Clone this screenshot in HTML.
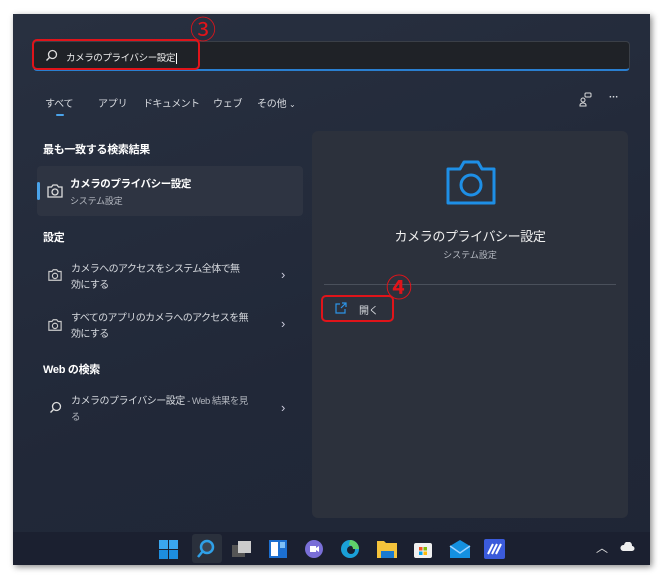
<!DOCTYPE html>
<html><head><meta charset="utf-8"><style>
body{margin:0;width:665px;height:579px;background:#fff;position:relative;overflow:hidden;font-family:"Liberation Sans","Noto Sans CJK JP",sans-serif;color:#fff}
.win{position:absolute;left:13px;top:14px;width:637px;height:551px;background:linear-gradient(160deg,#283040,#212838 60%,#1f2636);box-shadow:2px 2px 6px rgba(0,0,0,.45)}
.a{position:absolute}
.sb{left:33px;top:41px;width:597px;height:30px;background:#1f2227;border:1px solid #3a3f47;border-bottom:2px solid #2a7fd0;border-radius:4px;box-sizing:border-box}
.t{font-size:10px;color:#d8dbe0;white-space:nowrap;letter-spacing:-0.2px}
.h{font-size:11px;font-weight:bold;color:#fff;letter-spacing:-0.3px}
.rp{left:312px;top:131px;width:316px;height:387px;background:#2c313c;border-radius:6px}
.hl{left:37px;top:166px;width:266px;height:50px;background:#2e3442;border-radius:4px}
.chev{font-size:13px;color:#ccd}
.red{border:2.5px solid #e0141a;border-radius:5px;box-sizing:border-box}
.circ{color:#e0141a;font-size:26px;font-weight:normal}
.tb{left:13px;top:532px;width:637px;height:33px;background:#1b2030}
</style></head><body>
<div class="win"></div>
<div class="a sb"></div>
<svg class="a" style="left:45px;top:49px" width="13" height="13" viewBox="0 0 13 13"><circle cx="7.5" cy="5.5" r="4" fill="none" stroke="#ddd" stroke-width="1.3"/><path d="M4.7 8.3L1.5 11.5" stroke="#ddd" stroke-width="1.4"/></svg>
<div class="a t" style="left:66px;top:50px;color:#eee;font-size:9.5px;letter-spacing:-0.4px">カメラのプライバシー設定<span style="border-left:1px solid #fff;margin-left:1px"></span></div>
<div class="a red" style="left:32px;top:39px;width:168px;height:31px"></div>
<div class="a circ" style="left:190px;top:10px">③</div>
<div class="a t" style="left:45px;top:95px">すべて</div>
<div class="a" style="left:56px;top:114px;width:8px;height:2px;background:#4aa3ea;border-radius:1px"></div>
<div class="a t" style="left:98px;top:95px">アプリ</div>
<div class="a t" style="left:143px;top:95px;letter-spacing:-0.6px">ドキュメント</div>
<div class="a t" style="left:213px;top:95px">ウェブ</div>
<div class="a t" style="left:257px;top:95px">その他 <span style="font-size:8px">⌄</span></div>
<svg class="a" style="left:579px;top:92px" width="14" height="16" viewBox="0 0 14 16"><rect x="6" y="1" width="6" height="4" rx="1" fill="none" stroke="#ddd"/><circle cx="4" cy="8" r="2" fill="none" stroke="#ddd"/><path d="M1 13a3 2 0 0 1 6 0v1H1z" fill="none" stroke="#ddd"/></svg>
<div class="a t" style="left:609px;top:92px;font-weight:bold">···</div>
<div class="a h" style="left:43px;top:141px">最も一致する検索結果</div>
<div class="a hl"></div>
<div class="a" style="left:37px;top:182px;width:3px;height:18px;background:#4aa3ea;border-radius:2px"></div>
<svg class="a" style="left:46px;top:183px" width="18" height="16" viewBox="0 0 18 16"><path d="M2 4h3.5l1.5-2h4l1.5 2H16v10H2z" fill="none" stroke="#ddd" stroke-width="1.3"/><circle cx="9" cy="9" r="3" fill="none" stroke="#ddd" stroke-width="1.3"/></svg>
<div class="a t" style="left:70px;top:176px;font-weight:bold;color:#fff;font-size:10.5px;letter-spacing:-0.4px">カメラのプライバシー設定</div>
<div class="a t" style="left:70px;top:194px;font-size:9px;color:#b8bcc4">システム設定</div>
<div class="a h" style="left:43px;top:229px">設定</div>
<svg class="a" style="left:47px;top:268px" width="16" height="14" viewBox="0 0 18 16"><path d="M2 4h3.5l1.5-2h4l1.5 2H16v10H2z" fill="none" stroke="#ccc" stroke-width="1.3"/><circle cx="9" cy="9" r="3" fill="none" stroke="#ccc" stroke-width="1.3"/></svg>
<div class="a t" style="left:71px;top:262px;line-height:16px;letter-spacing:-0.6px">カメラへのアクセスをシステム全体で無<br>効にする</div>
<div class="a chev" style="left:281px;top:267px">›</div>
<svg class="a" style="left:47px;top:318px" width="16" height="14" viewBox="0 0 18 16"><path d="M2 4h3.5l1.5-2h4l1.5 2H16v10H2z" fill="none" stroke="#ccc" stroke-width="1.3"/><circle cx="9" cy="9" r="3" fill="none" stroke="#ccc" stroke-width="1.3"/></svg>
<div class="a t" style="left:71px;top:311px;line-height:16px;letter-spacing:-0.6px">すべてのアプリのカメラへのアクセスを無<br>効にする</div>
<div class="a chev" style="left:281px;top:316px">›</div>
<div class="a h" style="left:43px;top:361px">Web の検索</div>
<svg class="a" style="left:49px;top:401px" width="13" height="13" viewBox="0 0 13 13"><circle cx="7.5" cy="5.5" r="4" fill="none" stroke="#ddd" stroke-width="1.3"/><path d="M4.7 8.3L1.5 11.5" stroke="#ddd" stroke-width="1.4"/></svg>
<div class="a t" style="left:71px;top:394px;line-height:16px;letter-spacing:-0.5px">カメラのプライバシー設定 <span style="color:#b0b4bc;font-size:9.5px">- Web 結果を見<br>る</span></div>
<div class="a chev" style="left:281px;top:400px">›</div>
<div class="a rp"></div>
<svg class="a" style="left:444px;top:157px" width="54" height="50" viewBox="0 0 54 50"><path d="M4 12h12l4-7h14l4 7h12v34H4z" fill="none" stroke="#1e8fe6" stroke-width="3" stroke-linejoin="round"/><circle cx="27" cy="28" r="10" fill="none" stroke="#1e8fe6" stroke-width="3"/></svg>
<div class="a" style="left:312px;top:226px;width:316px;text-align:center;font-size:13px;letter-spacing:-0.4px;color:#f0f0f0">カメラのプライバシー設定</div>
<div class="a" style="left:312px;top:248px;width:316px;text-align:center;font-size:9px;color:#b8bcc4">システム設定</div>
<div class="a" style="left:324px;top:284px;width:292px;height:1px;background:#4a505b"></div>
<svg class="a" style="left:335px;top:302px" width="12" height="12" viewBox="0 0 12 12"><path d="M5 2H1v9h9V7M7 1h4v4M11 1L6 6" fill="none" stroke="#2c94e6" stroke-width="1.2"/></svg>
<div class="a t" style="left:359px;top:302px;font-size:10px">開く</div>
<div class="a red" style="left:321px;top:295px;width:73px;height:27px"></div>
<div class="a circ" style="left:386px;top:268px;font-weight:bold">④</div>
<div class="a tb"></div>
<div class="a" style="left:192px;top:534px;width:30px;height:29px;background:#2a303c;border-radius:3px"></div>
<svg class="a" style="left:159px;top:540px" width="20" height="20"><rect x="0" y="0" width="9" height="9" fill="#3aa7f0"/><rect x="10" y="0" width="9" height="9" fill="#3aa7f0"/><rect x="0" y="10" width="9" height="9" fill="#1d8ee0"/><rect x="10" y="10" width="9" height="9" fill="#1d8ee0"/></svg>
<svg class="a" style="left:196px;top:539px" width="20" height="20"><circle cx="11" cy="8" r="6" fill="#3a4452" stroke="#2fa0e8" stroke-width="2.5"/><path d="M7 12L2 18" stroke="#2fa0e8" stroke-width="2.5"/></svg>
<svg class="a" style="left:232px;top:540px" width="20" height="18"><rect x="0" y="5" width="13" height="12" fill="#555"/><rect x="6" y="1" width="13" height="12" fill="#ccc"/></svg>
<svg class="a" style="left:268px;top:539px" width="20" height="20"><rect x="1" y="1" width="18" height="18" fill="#1c6fd0"/><rect x="3" y="3" width="7" height="14" fill="#fff"/><rect x="12" y="3" width="5" height="6" fill="#7fc0f5"/></svg>
<svg class="a" style="left:304px;top:539px" width="20" height="20"><circle cx="10" cy="10" r="9" fill="#7a6fd8"/><rect x="6" y="7" width="6" height="6" fill="#fff"/><path d="M12 9l3-2v6l-3-2z" fill="#fff"/></svg>
<svg class="a" style="left:340px;top:539px" width="20" height="20"><circle cx="10" cy="10" r="9" fill="#1aa0d8"/><circle cx="11" cy="11" r="4" fill="#1b2030"/><path d="M10 1a9 9 0 0 1 9 9h-6a4 4 0 0 0-4-4z" fill="#5fd06a"/></svg>
<svg class="a" style="left:376px;top:539px" width="22" height="20"><path d="M1 2h7l2 2h11v15H1z" fill="#f5c33b"/><rect x="5" y="12" width="13" height="7" fill="#1a7ad0"/></svg>
<svg class="a" style="left:413px;top:539px" width="20" height="20"><rect x="1" y="4" width="18" height="15" rx="2" fill="#f0f0f0"/><rect x="6" y="8" width="3.5" height="3.5" fill="#f35325"/><rect x="10.5" y="8" width="3.5" height="3.5" fill="#81bc06"/><rect x="6" y="12.5" width="3.5" height="3.5" fill="#05a6f0"/><rect x="10.5" y="12.5" width="3.5" height="3.5" fill="#ffba08"/></svg>
<svg class="a" style="left:449px;top:540px" width="22" height="18"><path d="M1 6L11 0l10 6v12H1z" fill="#1490df"/><path d="M1 6l10 7 10-7" fill="none" stroke="#9fd3ff" stroke-width="1.5"/></svg>
<svg class="a" style="left:484px;top:539px" width="21" height="20"><rect width="21" height="20" rx="2" fill="#3b5bdb"/><path d="M4 15l5-10M8 15l5-10M12 15l5-10" stroke="#fff" stroke-width="2"/></svg>
<div class="a" style="left:596px;top:539px;font-size:12px;color:#ddd">︿</div>
<svg class="a" style="left:620px;top:542px" width="16" height="10"><path d="M3 9a3 3 0 0 1 1-6 4 4 0 0 1 8 1 2.5 2.5 0 0 1 0 5z" fill="#eee"/></svg>
</body></html>
